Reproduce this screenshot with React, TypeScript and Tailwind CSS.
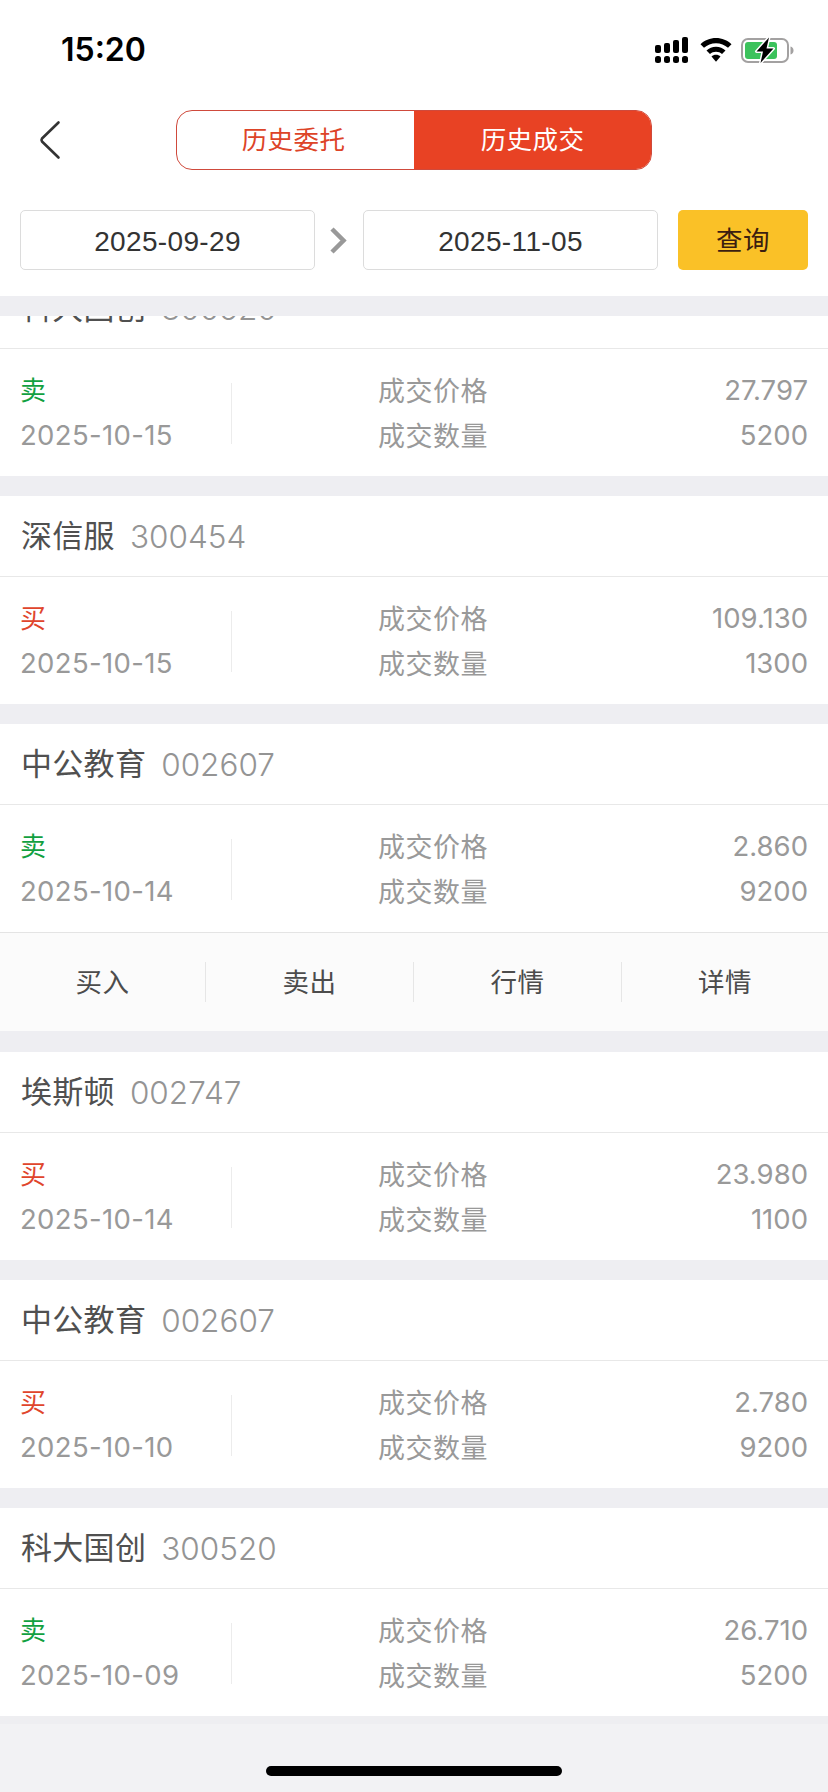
type Trade = {
  name: string;
  code: string;
  side: "buy" | "sell";
  date: string;
  price: string;
  amount: string;
  expanded?: boolean;
};

const trades: Trade[] = [
  { name: "科大国创", code: "300520", side: "sell", date: "2025-10-15", price: "27.797", amount: "5200" },
  { name: "深信服", code: "300454", side: "buy", date: "2025-10-15", price: "109.130", amount: "1300" },
  { name: "中公教育", code: "002607", side: "sell", date: "2025-10-14", price: "2.860", amount: "9200", expanded: true },
  { name: "埃斯顿", code: "002747", side: "buy", date: "2025-10-14", price: "23.980", amount: "1100" },
  { name: "中公教育", code: "002607", side: "buy", date: "2025-10-10", price: "2.780", amount: "9200" },
  { name: "科大国创", code: "300520", side: "sell", date: "2025-10-09", price: "26.710", amount: "5200" },
];

const actions = ["买入", "卖出", "行情", "详情"];

function SignalIcon() {
  return (
    <svg width="33" height="26" viewBox="0 0 33 26">
      <rect x="0" y="8" width="6" height="8" rx="2" />
      <rect x="9" y="6" width="6" height="10" rx="2" />
      <rect x="18" y="3" width="6" height="13" rx="2" />
      <rect x="27" y="0" width="6" height="16" rx="2" />
      <rect x="0" y="19" width="6" height="7" rx="2.5" />
      <rect x="9" y="19" width="6" height="7" rx="2.5" />
      <rect x="18" y="19" width="6" height="7" rx="2.5" />
      <rect x="27" y="19" width="6" height="7" rx="2.5" />
    </svg>
  );
}

function WifiIcon() {
  return (
    <svg width="32" height="24" viewBox="0 0 32 24">
      <path d="M16 0C22 0 27.400 2.300 31.500 6.200L28 9.800C24.800 6.900 20.600 5.200 16 5.200S7.200 6.900 4 9.800L.5 6.200C4.600 2.300 10 0 16 0Z" />
      <path d="M16 8.700C19.700 8.700 23 10.100 25.500 12.400L22 15.900C20.400 14.500 18.300 13.700 16 13.700S11.600 14.500 10 15.900L6.500 12.400C9 10.100 12.300 8.700 16 8.700Z" />
      <path d="M16 16.800C17.800 16.800 19.300 17.400 20.500 18.500L16 23.700L11.500 18.500C12.700 17.400 14.200 16.800 16 16.800Z" />
    </svg>
  );
}

function BatteryIcon() {
  return (
    <svg width="53" height="28" viewBox="0 0 53 28">
      <rect x="1" y="3" width="46" height="23" rx="6" fill="none" stroke="#a3a1a1" strokeWidth="2" />
      <rect x="4" y="6" width="32" height="17" rx="3" fill="#3cc25c" />
      <path d="M49.500 10.500C51.500 11 52.500 12.500 52.500 14.500S51.500 18 49.500 18.500Z" fill="#a3a1a1" />
      <path
        d="M28 1.500L15.500 15.500H22L19.500 27L32.500 12.500H25.500Z"
        fill="#000"
        stroke="#fff"
        strokeWidth="3"
        strokeLinejoin="round"
        paintOrder="stroke"
      />
    </svg>
  );
}

function StatusBar() {
  return (
    <div className="flex h-[100px] items-center justify-between pr-[34px] pl-[61px]">
      <span className="font-[Inter] text-[32px] leading-none font-semibold">
        15:20
      </span>
      <div className="flex items-center">
        <SignalIcon />
        <div className="mr-[9px] ml-[12px]">
          <WifiIcon />
        </div>
        <BatteryIcon />
      </div>
    </div>
  );
}

function Tabs() {
  return (
    <div className="flex h-[80px] items-center">
      <button type="button" aria-label="返回" className="ml-[38px]">
        <svg width="24" height="40" viewBox="0 0 24 40" fill="none" stroke="#333" strokeWidth="2.6" strokeLinecap="round" strokeLinejoin="round">
          <path d="M20.500 2.500L4 18.500Q3 20 4 21.500L20.500 37.500" />
        </svg>
      </button>
      <div className="ml-[114px] flex h-[60px] w-[476px] overflow-hidden rounded-[16px] border border-[#cf4a3c] text-[25.500px] tracking-[0.400px]">
        <button type="button" className="w-[237px] pr-[4px] text-[#dd4428]">
          历史委托
        </button>
        <button type="button" className="flex-1 bg-[#e84224] text-white">
          历史成交
        </button>
      </div>
    </div>
  );
}

function DateRange() {
  return (
    <div className="flex h-[116px] items-start px-5 pt-[30px]">
      <div className="flex h-[60px] w-[295px] items-center justify-center rounded-[5px] border border-[#dcdcdc] pt-[3px] text-[28px] tracking-[0.350px] text-[#333]">
        2025-09-29
      </div>
      <svg className="mt-[17px] mr-[16px] ml-[15px]" width="17" height="27" viewBox="0 0 17 27" fill="none" stroke="#999" strokeWidth="4.500">
        <path d="M2 2L13.500 13.500L2 25" />
      </svg>
      <div className="flex h-[60px] w-[295px] items-center justify-center rounded-[5px] border border-[#dcdcdc] pt-[3px] text-[28px] tracking-[0.350px] text-[#333]">
        2025-11-05
      </div>
      <button type="button" className="ml-[20px] h-[60px] w-[130px] rounded-[5px] bg-[#fac127] pt-[4px] text-[26.500px] tracking-[0.400px] text-[#3c1e10]">
        查询
      </button>
    </div>
  );
}

function TradeCard({ trade }: { trade: Trade }) {
  return (
    <article className="bg-white">
      <header className="flex h-[81px] items-center border-b border-[#e8e8e8] pl-[21px]">
        <h2 className="pt-[3px] text-[31px] tracking-[0.300px] text-[#505050]">{trade.name}</h2>
        <span className="ml-[15px] pt-px font-[Inter] text-[31.500px] font-[350] text-[#949494]">
          {trade.code}
        </span>
      </header>
      <div className="flex h-[127px] items-start pt-[19px] pr-5 pl-5 leading-[45px] text-[#999]">
        <div className="w-[211px]">
          <p className={trade.side === "buy" ? "pt-px text-[26px] leading-[44px] text-[#e0452c]" : "pt-px text-[26px] leading-[44px] text-[#11a040]"}>
            {trade.side === "buy" ? "买" : "卖"}
          </p>
          <p className="font-[Inter] text-[27.500px] tracking-[0.350px]">{trade.date}</p>
        </div>
        <div className="mt-[15px] h-[61px] w-px bg-[#ececec]" />
        <div className="ml-[146px] pt-[2px] text-[27px] tracking-[0.500px]">
          <p>成交价格</p>
          <p>成交数量</p>
        </div>
        <div className="ml-auto text-right font-[Inter] text-[27.500px]">
          <p>{trade.price}</p>
          <p>{trade.amount}</p>
        </div>
      </div>
      {trade.expanded && (
        <div className="grid h-[100px] grid-cols-[206px_208px_208px_206px] items-center border-t border-b border-t-[#e4e4e4] border-b-[#eeeef2] bg-[#fbfbfb]">
          {actions.map((action) => (
            <button
              key={action}
              type="button"
              className="h-[40px] border-r border-[#e6e6e6] pt-[2px] text-[26.500px] leading-[38px] tracking-[0.400px] text-[#4c4c4c] last:border-r-0"
            >
              {action}
            </button>
          ))}
        </div>
      )}
    </article>
  );
}

export default function App() {
  return (
    <div className="flex h-[1792px] w-[828px] flex-col overflow-hidden bg-white font-['Liberation_Sans','Noto_Sans_CJK_SC',sans-serif] text-black">
      <StatusBar />
      <Tabs />
      <DateRange />
      <main className="h-[1420px] shrink-0 overflow-hidden border-t-[20px] border-[#eeeef2] bg-[#eeeef2]">
        {/* list is scrolled, the first card sits partly under the filter bar */}
        <div className="-mt-[48px] flex flex-col gap-5">
          {trades.map((trade) => (
            <TradeCard key={`${trade.code}-${trade.date}`} trade={trade} />
          ))}
        </div>
      </main>
      <footer className="flex h-[76px] items-end justify-center border-t-[8px] border-[#eeeef1] bg-[#f2f2f4] pb-[16px]">
        <div className="h-[10px] w-[296px] rounded-full bg-black" />
      </footer>
    </div>
  );
}
